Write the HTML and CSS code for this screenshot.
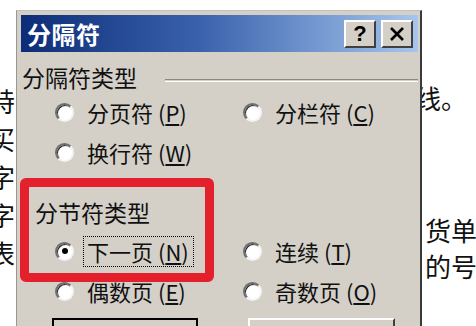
FILE: index.html
```html
<!DOCTYPE html>
<html lang="zh-CN">
<head>
<meta charset="utf-8">
<title>分隔符</title>
<link rel="stylesheet" href="styles.css">
</head>
<body>
<div class="page">
  <div class="doc">
    <div class="doc-left">
      <p>特</p><p>买</p><p>字</p><p>字</p><p>表</p>
    </div>
    <div class="doc-right">
      <p class="r1">线。</p>
      <p class="r2">货单</p>
      <p class="r3">的号</p>
    </div>
  </div>

  <div class="dialog">
    <div class="titlebar">
      <span class="title">分隔符</span>
      <div class="tb-buttons">
        <div class="tb-btn">?</div>
        <div class="tb-btn close">
          <svg width="16" height="14" viewBox="0 0 16 14"><path d="M2 1 L14 13 M14 1 L2 13" stroke="#000" stroke-width="2.6" fill="none"/></svg>
        </div>
      </div>
    </div>
    <div class="body">
      <div class="group-head">
        <span>分隔符类型</span>
        <div class="etch"></div>
      </div>
      <div class="opts">
        <div class="opt"><span class="radio"></span><span>分页符 (<u>P</u>)</span></div>
        <div class="opt"><span class="radio"></span><span>分栏符 (<u>C</u>)</span></div>
        <div class="opt"><span class="radio"></span><span>换行符 (<u>W</u>)</span></div>
      </div>
      <div class="section-head">分节符类型</div>
      <div class="opts">
        <div class="opt focus-opt"><span class="radio on"></span><span class="focus">下一页 (<u>N</u>)</span></div>
        <div class="opt"><span class="radio"></span><span>连续 (<u>T</u>)</span></div>
        <div class="opt"><span class="radio"></span><span>偶数页 (<u>E</u>)</span></div>
        <div class="opt"><span class="radio"></span><span>奇数页 (<u>O</u>)</span></div>
      </div>
      <div class="buttons">
        <div class="btn default" aria-label="确定"></div>
        <div class="btn" aria-label="取消"></div>
      </div>
    </div>
  </div>

  <div class="annot"></div>
</div>
</body>
</html>
```
FILE: styles.css
```css
html, body {
  margin: 0;
  padding: 0;
  background: #fff;
}
body {
  font-family: "Noto Sans CJK SC", "Noto Sans", sans-serif;
  color: #111;
}
.page {
  position: relative;
  width: 476px;
  height: 326px;
  overflow: hidden;
}
.doc {
  display: flex;
  width: 476px;
  height: 326px;
  overflow: hidden;
  font-size: 26px;
  color: #111;
}
.doc p {
  margin: 0;
  white-space: nowrap;
}
.doc-left {
  margin-left: -11px;
  padding-top: 82px;
  width: 40px;
}
.doc-left p {
  line-height: 38px;
}
.doc-right {
  margin-left: auto;
  width: 51px;
}
.doc-right .r1 {
  margin-top: 82px;
  margin-left: -10px;
  line-height: 32px;
}
.doc-right .r2 {
  margin-top: 98px;
  line-height: 36px;
}
.doc-right .r3 {
  line-height: 36px;
}

.dialog {
  position: absolute;
  left: 16px;
  top: 10px;
  width: 406px;
  height: 330px;
  box-sizing: border-box;
  background: #d4d0c8;
  border-top: 1px solid #c4c1ba;
  border-left: 1px solid #9a978f;
  border-right: 2px solid #3a3a3a;
  padding: 4px 2px 0 4px;
}
.titlebar {
  height: 37px;
  display: flex;
  align-items: center;
  justify-content: space-between;
  background: linear-gradient(to right, #0d2c78 0%, #3a62ac 45%, #a6c6ee 100%);
  padding-left: 6px;
  padding-right: 5px;
}
.title {
  color: #fff;
  font-weight: 700;
  font-size: 24px;
  letter-spacing: 0.5px;
}
.tb-buttons {
  display: flex;
  gap: 5px;
}
.tb-btn {
  width: 32px;
  height: 28px;
  box-sizing: border-box;
  background: #d4d0c8;
  border-top: 2px solid #fff;
  border-left: 2px solid #fff;
  border-right: 2px solid #404040;
  border-bottom: 2px solid #404040;
  display: flex;
  align-items: center;
  justify-content: center;
  font-family: "Liberation Sans", sans-serif;
  font-weight: 700;
  font-size: 22px;
  color: #000;
}
.body {
  font-size: 22px;
}
.group-head {
  margin-top: 10px;
  height: 30px;
  display: flex;
  align-items: center;
  gap: 28px;
  padding-left: 1px;
  font-size: 23px;
}
.etch {
  flex: 1;
  height: 1px;
  margin-top: 7px;
  border-top: 1px solid #8a877f;
  border-bottom: 1px solid #fff;
}
.opts {
  display: grid;
  grid-template-columns: 188px 1fr;
  grid-auto-rows: 40px;
  padding-left: 34px;
}
.opt {
  display: flex;
  align-items: center;
  gap: 13px;
}
.focus-opt {
  gap: 9px;
}
.focus {
  border: 1px dotted #000;
  padding: 0 4px 0 3px;
  line-height: 29px;
}
.radio {
  position: relative;
  width: 19px;
  height: 19px;
  flex: none;
  box-sizing: border-box;
  border-radius: 50%;
  border: 2px solid;
  border-color: #6e6e6e #f4f4f4 #f4f4f4 #6e6e6e;
  background: #fff;
  box-shadow: inset 1px 1px 0 #2a2a2a;
}
.radio.on::after {
  content: "";
  position: absolute;
  left: 50%;
  top: 50%;
  width: 6px;
  height: 6px;
  margin: -3px 0 0 -3px;
  border-radius: 50%;
  background: #000;
}
.section-head {
  margin-top: 25px;
  height: 30px;
  line-height: 30px;
  padding-left: 14px;
  font-size: 23px;
}
.opts + .section-head + .opts {
  margin-top: 4px;
}
.buttons {
  margin-top: 7px;
  padding-left: 31px;
  display: flex;
  gap: 50px;
}
.btn {
  width: 147px;
  height: 34px;
  box-sizing: border-box;
  background: #d4d0c8;
  border-top: 2px solid #fff;
  border-left: 2px solid #fff;
  border-right: 2px solid #404040;
}
.btn.default {
  width: 146px;
  border: 2px solid #000;
}
.annot {
  position: absolute;
  left: 20px;
  top: 178px;
  width: 194px;
  height: 104px;
  box-sizing: border-box;
  border: 9px solid #e3202b;
  border-radius: 6px;
}
```
